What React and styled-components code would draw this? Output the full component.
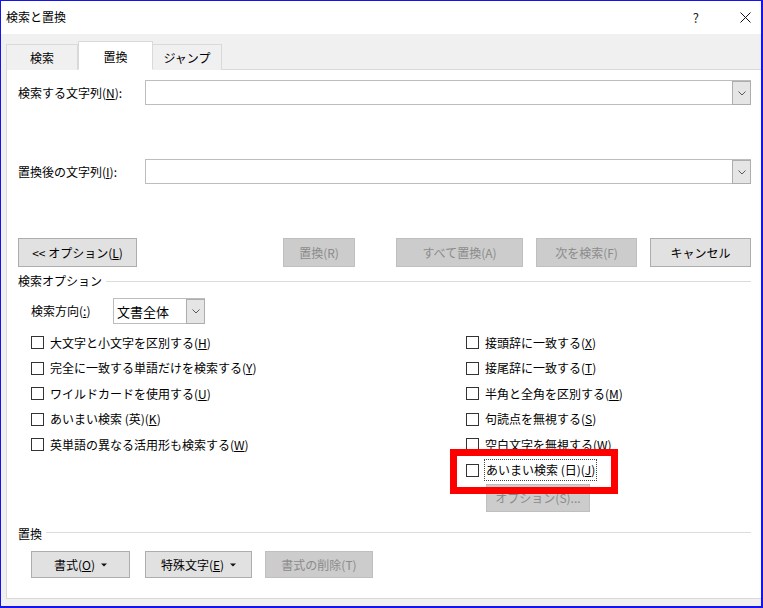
import styled, { createGlobalStyle } from "styled-components";

const GlobalStyle = createGlobalStyle`
  body {
    margin: 0;
    font-family: "Noto Sans CJK JP", "Noto Sans", sans-serif;
    font-size: 12px;
    color: #000;
  }
`;

const Window = styled.div`
  width: 763px;
  height: 608px;
  box-sizing: border-box;
  border: 1px solid #1414f0;
  border-right-width: 2px;
  border-bottom-width: 2px;
  background-color: #f0f0f0;
  display: flex;
  flex-direction: column;
`;

const TitleBar = styled.div`
  height: 33px;
  flex-shrink: 0;
  background-color: #fff;
  display: flex;
  align-items: center;
  padding-left: 5px;
`;

const Title = styled.span`
  flex: 1;
  font-size: 12px;
  line-height: 1;
  margin-top: -1px;
`;

const HelpMark = styled.span`
  font-size: 13px;
  line-height: 1;
  margin-right: 41px;
  color: #222;
`;

const CloseIcon = styled.svg`
  margin-right: 10px;
`;

const Body = styled.div`
  flex: 1;
  display: flex;
  flex-direction: column;
  padding: 9px 0 7px 5px;
`;

const TabRow = styled.div`
  height: 27px;
  display: flex;
  align-items: flex-end;
  position: relative;
  z-index: 1;
  margin-bottom: -1px;
`;

const Tab = styled.div`
  width: ${(p) => p.$w}px;
  height: ${(p) => (p.$active ? 29 : 26)}px;
  box-sizing: border-box;
  border: 1px solid #d9d9d9;
  border-bottom: ${(p) => (p.$active ? "1px solid #fff" : "none")};
  border-left: ${(p) => (p.$active || p.$first ? "1px solid #d9d9d9" : "none")};
  background-color: ${(p) => (p.$active ? "#fff" : "#f0f0f0")};
  display: flex;
  align-items: center;
  justify-content: center;
  padding-top: ${(p) => (p.$active ? 2 : 0)}px;
  line-height: 1;
`;

const Panel = styled.div`
  flex: 1;
  background-color: #fff;
  border: 1px solid #d9d9d9;
  border-right: none;
  padding: 10px 10px 0 11px;
  display: flex;
  flex-direction: column;
`;

const FieldRow = styled.div`
  height: 25px;
  display: flex;
  align-items: center;
  margin-top: ${(p) => p.$mt || 0}px;
`;

const FieldLabel = styled.span`
  width: 127px;
  flex-shrink: 0;
  line-height: 1;
`;

const Combo = styled.div`
  flex: 1;
  height: 25px;
  box-sizing: border-box;
  border: 1px solid #bdbdbd;
  display: flex;
  justify-content: flex-end;
  align-items: stretch;
  background: #fff;
`;

const DropButton = styled.div`
  width: 19px;
  box-sizing: border-box;
  margin: 0 -1px -1px 0;
  border: 1px solid #adadad;
  background-color: #e5e5e5;
  display: flex;
  align-items: center;
  justify-content: center;
`;

const ButtonRow = styled.div`
  display: flex;
  margin-top: 54px;
`;

const Button = styled.div`
  width: ${(p) => p.$w}px;
  height: ${(p) => p.$h || 29}px;
  box-sizing: border-box;
  border: 1px solid ${(p) => (p.$disabled ? "#bfbfbf" : "#adadad")};
  background-color: ${(p) => (p.$disabled ? "#cccccc" : "#e1e1e1")};
  color: ${(p) => (p.$disabled ? "#8b8b8b" : "#000")};
  display: flex;
  align-items: center;
  justify-content: center;
  gap: 6px;
  line-height: 1;
  margin-left: ${(p) => p.$ml || 0}px;
  margin-top: ${(p) => p.$mt || 0}px;
  flex-shrink: 0;
`;

const SectionHeader = styled.div`
  display: flex;
  align-items: center;
  gap: 4px;
  height: 16px;
  margin-top: ${(p) => p.$mt}px;
`;

const SectionText = styled.span`
  line-height: 1;
`;

const SectionLine = styled.div`
  flex: 1;
  height: 1px;
  background-color: #dcdcdc;
  margin-top: ${(p) => p.$dy || 0}px;
`;

const Options = styled.div`
  padding-left: 13px;
  display: flex;
  flex-direction: column;
`;

const DirectionRow = styled.div`
  display: flex;
  align-items: center;
  height: 26px;
  margin-top: 9px;
`;

const DirectionLabel = styled.span`
  width: 82px;
  line-height: 1;
`;

const Select = styled.div`
  width: 92px;
  height: 26px;
  box-sizing: border-box;
  border: 1px solid #bdbdbd;
  display: flex;
  align-items: stretch;
`;

const SelectText = styled.span`
  flex: 1;
  display: flex;
  align-items: center;
  padding-left: 3px;
  font-size: 13px;
`;

const Columns = styled.div`
  display: flex;
  margin-top: 6px;
`;

const Column = styled.div`
  width: ${(p) => (p.$w ? `${p.$w}px` : "auto")};
  display: flex;
  flex-direction: column;
`;

const CheckRow = styled.div`
  height: 25.5px;
  display: flex;
  align-items: center;
  position: relative;
`;

const Box = styled.span`
  width: 13px;
  height: 13px;
  box-sizing: border-box;
  border: 1px solid #333;
  background: #fff;
  flex-shrink: 0;
`;

const CheckLabel = styled.span`
  margin-left: ${(p) => (p.$focus ? 5 : 6)}px;
  line-height: 1;
  padding: ${(p) => (p.$focus ? "4px 1px" : "0")};
  border: ${(p) => (p.$focus ? "1px dotted #444" : "none")};
`;

const Highlight = styled.div`
  position: absolute;
  left: -16px;
  top: -9px;
  width: 168px;
  height: 45px;
  box-sizing: border-box;
  border: 7px solid #ff0000;
  z-index: 2;
  pointer-events: none;
`;

const BottomRow = styled.div`
  display: flex;
  padding-left: 13px;
  margin-top: 9px;
`;

const Chevron = () => (
  <svg width="8" height="5" viewBox="0 0 8 5">
    <path d="M0.5 0.5 L4 4 L7.5 0.5" fill="none" stroke="#5a5a5a" strokeWidth="1" />
  </svg>
);

const Caret = () => (
  <svg width="6" height="4" viewBox="0 0 6 4">
    <path d="M0 0.5 L6 0.5 L3 3.5 Z" fill="#111" />
  </svg>
);

const leftChecks = [
  ["大文字と小文字を区別する(", "H", ")"],
  ["完全に一致する単語だけを検索する(", "Y", ")"],
  ["ワイルドカードを使用する(", "U", ")"],
  ["あいまい検索 (英)(", "K", ")"],
  ["英単語の異なる活用形も検索する(", "W", ")"],
];

const rightChecks = [
  ["接頭辞に一致する(", "X", ")"],
  ["接尾辞に一致する(", "T", ")"],
  ["半角と全角を区別する(", "M", ")"],
  ["句読点を無視する(", "S", ")"],
  ["空白文字を無視する(", "W", ")"],
];

const Label = ({ parts }) => (
  <>
    {parts[0]}
    <u>{parts[1]}</u>
    {parts[2]}
  </>
);

const App = () => {
  return (
    <>
      <GlobalStyle />
      <Window>
        <TitleBar>
          <Title>検索と置換</Title>
          <HelpMark>?</HelpMark>
          <CloseIcon width="11" height="11" viewBox="0 0 11 11">
            <path d="M0.5 0.5 L10.5 10.5 M10.5 0.5 L0.5 10.5" stroke="#111" strokeWidth="1" />
          </CloseIcon>
        </TitleBar>
        <Body>
          <TabRow>
            <Tab $w={72} $first>検索</Tab>
            <Tab $w={75} $active>置換</Tab>
            <Tab $w={69}>ジャンプ</Tab>
          </TabRow>
          <Panel>
            <FieldRow>
              <FieldLabel>検索する文字列(<u>N</u>):</FieldLabel>
              <Combo>
                <DropButton>
                  <Chevron />
                </DropButton>
              </Combo>
            </FieldRow>
            <FieldRow $mt={54}>
              <FieldLabel>置換後の文字列(<u>I</u>):</FieldLabel>
              <Combo>
                <DropButton>
                  <Chevron />
                </DropButton>
              </Combo>
            </FieldRow>
            <ButtonRow>
              <Button $w={119}>
                <span>&lt;&lt; オプション(<u>L</u>)</span>
              </Button>
              <Button $w={72} $ml={146} $disabled>置換(R)</Button>
              <Button $w={127} $ml={41} $disabled>すべて置換(A)</Button>
              <Button $w={101} $ml={13} $disabled>次を検索(F)</Button>
              <Button $w={101} $ml={13}>キャンセル</Button>
            </ButtonRow>
            <SectionHeader $mt={6}>
              <SectionText>検索オプション</SectionText>
              <SectionLine />
            </SectionHeader>
            <Options>
              <DirectionRow>
                <DirectionLabel>検索方向(<u>:</u>)</DirectionLabel>
                <Select>
                  <SelectText>文書全体</SelectText>
                  <DropButton>
                    <Chevron />
                  </DropButton>
                </Select>
              </DirectionRow>
              <Columns>
                <Column $w={435}>
                  {leftChecks.map((c) => (
                    <CheckRow key={c[0]}>
                      <Box />
                      <CheckLabel>
                        <Label parts={c} />
                      </CheckLabel>
                    </CheckRow>
                  ))}
                </Column>
                <Column>
                  {rightChecks.map((c) => (
                    <CheckRow key={c[0]}>
                      <Box />
                      <CheckLabel>
                        <Label parts={c} />
                      </CheckLabel>
                    </CheckRow>
                  ))}
                  <CheckRow>
                    <Box />
                    <CheckLabel $focus>
                      あいまい検索 (日)(<u>J</u>)
                    </CheckLabel>
                    <Highlight />
                  </CheckRow>
                  <Button $w={104} $h={28} $ml={20} $mt={1} $disabled>
                    オプション(S)...
                  </Button>
                </Column>
              </Columns>
            </Options>
            <SectionHeader $mt={14}>
              <SectionText>置換</SectionText>
              <SectionLine $dy={-3} />
            </SectionHeader>
            <BottomRow>
              <Button $w={99} $h={27}>
                <span>書式(<u>O</u>)</span>
                <Caret />
              </Button>
              <Button $w={107} $h={27} $ml={15}>
                <span>特殊文字(<u>E</u>)</span>
                <Caret />
              </Button>
              <Button $w={108} $h={27} $ml={13} $disabled>
                書式の削除(T)
              </Button>
            </BottomRow>
          </Panel>
        </Body>
      </Window>
    </>
  );
};

export default App;
